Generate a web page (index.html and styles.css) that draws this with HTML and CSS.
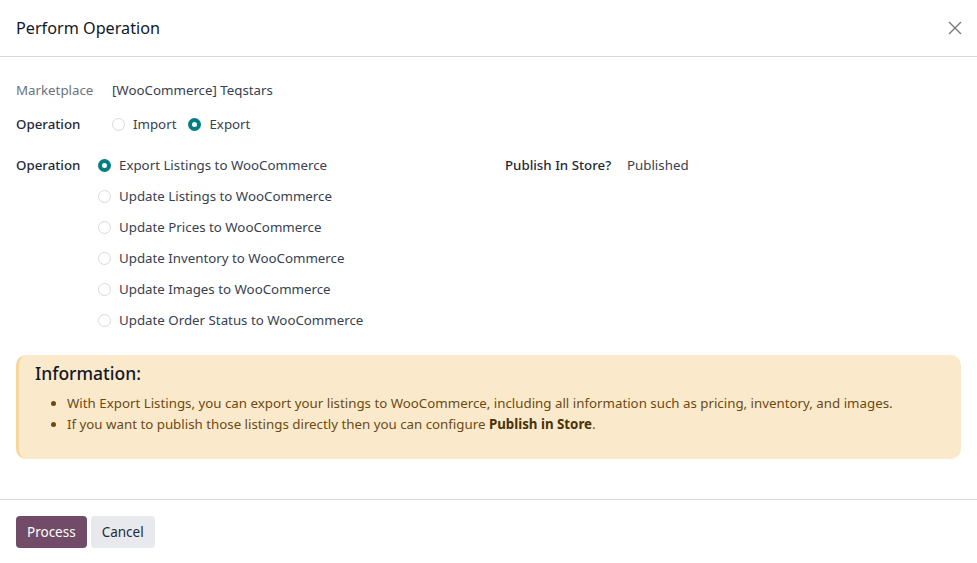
FILE: index.html
```html
<!DOCTYPE html>
<html lang="en">
<head>
  <meta charset="UTF-8">
  <title>Perform Operation</title>
  <link rel="stylesheet" href="styles.css">
</head>
<body>
  <div class="modal">
    <div class="modal-header">
      <h4 class="modal-title">Perform Operation</h4>
      <button class="btn-close" aria-label="Close">
        <svg width="14" height="14" viewBox="0 0 14 14">
          <path d="M1 1L13 13M13 1L1 13" stroke="#777" stroke-width="1.4" fill="none"/>
        </svg>
      </button>
    </div>

    <div class="modal-body">
      <div class="field-row">
        <span class="label muted">Marketplace</span>
        <span class="value">[WooCommerce] Teqstars</span>
      </div>
      <div class="field-row">
        <span class="label">Operation</span>
        <div class="radio-inline">
          <label class="radio"><span class="dot"></span>Import</label>
          <label class="radio"><span class="dot checked"></span>Export</label>
        </div>
      </div>

      <div class="group">
        <div class="group-col">
          <span class="label short">Operation</span>
          <div class="radio-list">
            <label class="radio"><span class="dot checked"></span>Export Listings to WooCommerce</label>
            <label class="radio"><span class="dot"></span>Update Listings to WooCommerce</label>
            <label class="radio"><span class="dot"></span>Update Prices to WooCommerce</label>
            <label class="radio"><span class="dot"></span>Update Inventory to WooCommerce</label>
            <label class="radio"><span class="dot"></span>Update Images to WooCommerce</label>
            <label class="radio"><span class="dot"></span>Update Order Status to WooCommerce</label>
          </div>
        </div>
        <div class="group-col right">
          <span class="label wide">Publish In Store?</span>
          <span class="value">Published</span>
        </div>
      </div>

      <div class="alert">
        <h3>Information:</h3>
        <ul>
          <li>With Export Listings, you can export your listings to WooCommerce, including all information such as pricing, inventory, and images.</li>
          <li>If you want to publish those listings directly then you can configure <b>Publish in Store</b>.</li>
        </ul>
      </div>
    </div>

    <div class="modal-footer">
      <button class="btn btn-primary">Process</button>
      <button class="btn btn-secondary">Cancel</button>
    </div>
  </div>
</body>
</html>
```

FILE: styles.css
```css
body {
  margin: 0;
  font-family: "Noto Sans", "Open Sans", sans-serif;
  font-size: 13.3px;
  line-height: 21px;
  color: #374151;
  background: #fff;
}
.modal {
  width: 977px;
}
.modal-header {
  display: flex;
  align-items: center;
  justify-content: space-between;
  height: 57px;
  padding: 0 15px 0 16px;
  border-bottom: 1px solid #d8dadd;
  box-sizing: border-box;
}
.modal-title {
  margin: 0;
  font-size: 16.2px;
  font-weight: 400;
  color: #111827;
}
.btn-close {
  border: 0;
  background: none;
  padding: 0;
  width: 14px;
  height: 14px;
  display: flex;
}
.modal-body {
  padding: 23px 16px 0 16px;
}
.field-row {
  display: flex;
  align-items: center;
  margin-bottom: 13px;
}
.label {
  width: 96px;
  font-weight: 500;
  color: #1f2937;
}
.label.muted {
  color: #6b7280;
  font-weight: 400;
}
.label.short {
  width: 82px;
}
.label.wide {
  width: 122px;
}
.radio-inline {
  display: flex;
  gap: 12px;
}
.radio {
  display: flex;
  align-items: center;
  gap: 8px;
}
.dot {
  width: 13px;
  height: 13px;
  border: 1px solid #d8dadd;
  border-radius: 50%;
  box-sizing: border-box;
  background: #fff;
}
.dot.checked {
  border: 4px solid #017e84;
}
.group {
  display: flex;
  margin-top: 20px;
}
.group-col {
  display: flex;
  align-items: flex-start;
  flex: none;
  width: 489px;
}
.group-col.right {
  flex: 1;
  width: auto;
}
.radio-list {
  display: flex;
  flex-direction: column;
  gap: 10px;
}
.alert {
  margin-top: 24px;
  background: #fbe9cb;
  border-left: 3px solid #f5d69c;
  border-radius: 10px;
  padding: 6px 16px 24px 16px;
}
.alert h3 {
  margin: 0 0 8px 0;
  font-size: 17.5px;
  font-weight: 500;
  line-height: 24px;
  color: #111827;
}
.alert ul {
  margin: 0;
  padding-left: 32px;
  color: #6b4a12;
}
.alert b {
  color: #4a3208;
}
.modal-footer {
  margin-top: 40px;
  border-top: 1px solid #d8dadd;
  padding: 16px;
  display: flex;
  gap: 4px;
}
.btn {
  height: 32px;
  padding: 0 11px;
  border: 0;
  border-radius: 4px;
  font-family: inherit;
  font-size: 13.5px;
  font-weight: 400;
}
.btn-primary {
  background: #714b67;
  color: #fff;
}
.btn-secondary {
  background: #e7e9ed;
  color: #1f2937;
}
```
